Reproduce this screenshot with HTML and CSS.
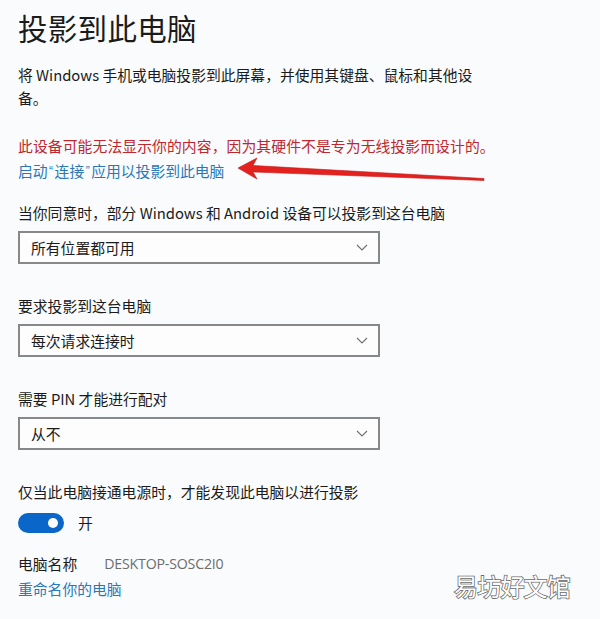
FILE: index.html
```html
<!DOCTYPE html>
<html lang="zh-CN">
<head>
<meta charset="utf-8">
<link rel="stylesheet" href="styles.css">
</head>
<body>
<main class="page">
  <h1 class="title">投影到此电脑</h1>
  <p class="desc">将 Windows 手机或电脑投影到此屏幕，并使用其键盘、鼠标和其他设<br>备。</p>
  <p class="warn">此设备可能无法显示你的内容，因为其硬件不是专为无线投影而设计的。</p>
  <div class="link-row">
    <a class="link">启动<span class="q">“</span>连接<span class="q">”</span>应用以投影到此电脑</a>
    <svg class="arrow" width="260" height="30" viewBox="0 0 260 30">
      <path d="M0 11 L19 1 L15 8.5 L246 21.5 L246 23.5 L15 15 L19 22 Z" fill="#e3211f" stroke="#c81818" stroke-width="0.6" stroke-linejoin="round"/>
    </svg>
  </div>

  <div class="field">
    <div class="label">当你同意时，部分 Windows 和 Android 设备可以投影到这台电脑</div>
    <div class="select"><span>所有位置都可用</span><svg class="chev" width="12" height="7" viewBox="0 0 12 7"><path d="M1 1 L6 6 L11 1" fill="none" stroke="#707070" stroke-width="1.1"/></svg></div>
  </div>
  <div class="field">
    <div class="label">要求投影到这台电脑</div>
    <div class="select"><span>每次请求连接时</span><svg class="chev" width="12" height="7" viewBox="0 0 12 7"><path d="M1 1 L6 6 L11 1" fill="none" stroke="#707070" stroke-width="1.1"/></svg></div>
  </div>
  <div class="field">
    <div class="label">需要 PIN 才能进行配对</div>
    <div class="select"><span>从不</span><svg class="chev" width="12" height="7" viewBox="0 0 12 7"><path d="M1 1 L6 6 L11 1" fill="none" stroke="#707070" stroke-width="1.1"/></svg></div>
  </div>
  <div class="field">
    <div class="label">仅当此电脑接通电源时，才能发现此电脑以进行投影</div>
    <div class="toggle-row"><span class="toggle"><span class="knob"></span></span><span>开</span></div>
  </div>
  <div class="name-row"><span>电脑名称</span><span class="pc">DESKTOP-SOSC2I0</span></div>
  <a class="link rename">重命名你的电脑</a>
</main>
<div class="watermark">易坊好文馆</div>
</body>
</html>
```
FILE: styles.css
```css
html, body {
  margin: 0;
  padding: 0;
  background: #f9fbfc;
}
body {
  font-family: "Noto Sans CJK SC", "Noto Sans", sans-serif;
  color: #1b1b1b;
  width: 600px;
  height: 619px;
  overflow: hidden;
  position: relative;
}
.page {
  padding: 8px 18px 0 18px;
}
.title {
  margin: 0;
  font-size: 29.5px;
  font-weight: 400;
  line-height: 38px;
  letter-spacing: 0.3px;
}
.desc {
  margin: 17px 0 0 0;
  font-size: 14.8px;
  line-height: 23px;
}
.warn {
  margin: 25px 0 0 0;
  font-size: 14.8px;
  line-height: 23px;
  color: #c0262d;
  letter-spacing: 0.1px;
}
.link-row {
  position: relative;
  margin-top: 2px;
  height: 23px;
}
.link {
  display: block;
  font-size: 14.8px;
  line-height: 23px;
  color: #2a78b8;
}
.q {
  font-family: "Liberation Sans", sans-serif;
  font-size: 12px;
  vertical-align: 2px;
  padding: 0 1.5px;
}
.arrow {
  position: absolute;
  left: 220px;
  top: -2px;
}
.field {
  margin-top: 19px;
}
.field + .field {
  margin-top: 30px;
}
.label {
  font-size: 14.8px;
  line-height: 23px;
}
.select {
  margin-top: 7px;
  width: 362px;
  height: 33px;
  box-sizing: border-box;
  border: 2px solid #888;
  background: #fdfdfd;
  display: flex;
  align-items: center;
  justify-content: space-between;
  padding: 0 10px 0 11px;
  font-size: 14.8px;
}
.toggle-row {
  margin-top: 9px;
  display: flex;
  align-items: center;
  gap: 14px;
  font-size: 14.8px;
  height: 21px;
}
.toggle {
  width: 46px;
  height: 20px;
  border-radius: 10px;
  background: #0a66c8;
  position: relative;
  display: inline-block;
}
.knob {
  position: absolute;
  right: 6px;
  top: 5px;
  width: 10px;
  height: 10px;
  border-radius: 50%;
  background: #fff;
}
.name-row {
  margin-top: 19px;
  font-size: 14.8px;
  line-height: 23px;
  display: flex;
  gap: 27px;
}
.pc {
  color: #6d6d6d;
  font-family: "Open Sans", "Noto Sans", sans-serif;
  font-size: 14.2px;
  letter-spacing: -0.2px;
}
.rename {
  margin-top: 2px;
}
.watermark {
  position: absolute;
  left: 454px;
  top: 571px;
  font-family: "Noto Sans CJK SC", sans-serif;
  font-size: 24px;
  line-height: 30px;
  color: #fff;
  -webkit-text-stroke: 1.6px #6a6a6a;
  paint-order: stroke fill;
  letter-spacing: -0.8px;
}
```
